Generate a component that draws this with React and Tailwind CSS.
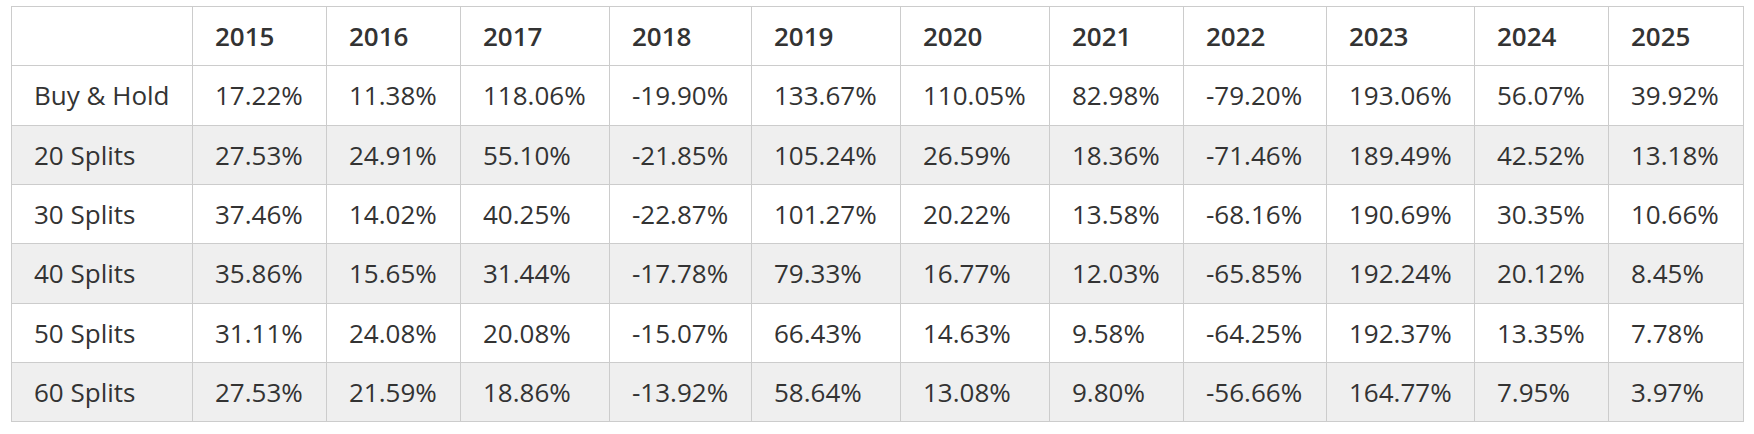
import React from "react";

const years = ["2015","2016","2017","2018","2019","2020","2021","2022","2023","2024","2025"];
const rows = [
  ["Buy & Hold","17.22%","11.38%","118.06%","-19.90%","133.67%","110.05%","82.98%","-79.20%","193.06%","56.07%","39.92%"],
  ["20 Splits","27.53%","24.91%","55.10%","-21.85%","105.24%","26.59%","18.36%","-71.46%","189.49%","42.52%","13.18%"],
  ["30 Splits","37.46%","14.02%","40.25%","-22.87%","101.27%","20.22%","13.58%","-68.16%","190.69%","30.35%","10.66%"],
  ["40 Splits","35.86%","15.65%","31.44%","-17.78%","79.33%","16.77%","12.03%","-65.85%","192.24%","20.12%","8.45%"],
  ["50 Splits","31.11%","24.08%","20.08%","-15.07%","66.43%","14.63%","9.58%","-64.25%","192.37%","13.35%","7.78%"],
  ["60 Splits","27.53%","21.59%","18.86%","-13.92%","58.64%","13.08%","9.80%","-56.66%","164.77%","7.95%","3.97%"],
];
const heights = ["h-[60px]","h-[59px]","h-[59px]","h-[60px]","h-[59px]","h-[59px]"];

export default function App() {
  return (
    <div className="w-[1754px] h-[434px] bg-white pt-[6px] pl-[11px]" style={{ fontFamily: '"Open Sans", sans-serif' }}>
      <div className="grid grid-cols-[181px_134px_134px_149px_142px_149px_149px_134px_143px_148px_134px_135px] w-[1733px] border-l border-t border-[#cccccc] text-[26px] text-[#333333]">
        <div className="h-[59px] border-r border-b border-[#cccccc]" />
        {years.map((y) => (
          <div key={y} className="h-[59px] flex items-center pl-[22px] border-r border-b border-[#cccccc] font-semibold">
            {y}
          </div>
        ))}
        {rows.map((r, i) =>
          r.map((c, j) => (
            <div
              key={i + "-" + j}
              className={`${heights[i]} flex items-center pl-[22px] border-r border-b border-[#cccccc] whitespace-nowrap ${i % 2 === 1 ? "bg-[#efefef]" : "bg-white"}`}
            >
              {c}
            </div>
          ))
        )}
      </div>
    </div>
  );
}
